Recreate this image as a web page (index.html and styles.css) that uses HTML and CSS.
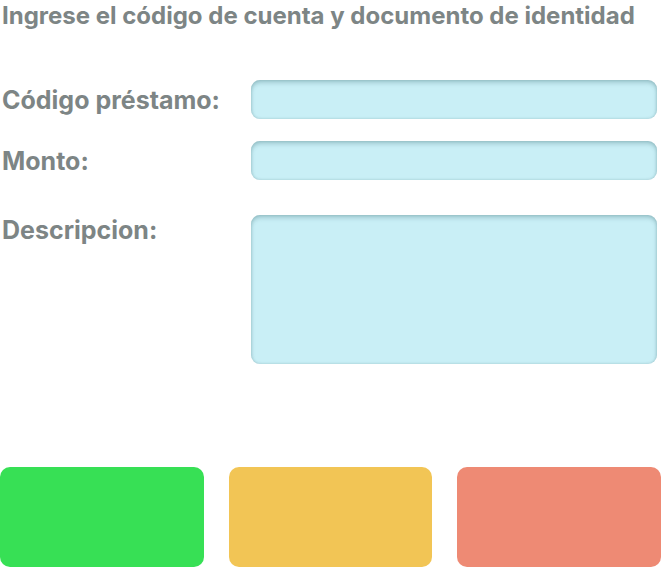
FILE: index.html
```html
<!DOCTYPE html>
<html lang="es">
<head>
<meta charset="utf-8">
<link rel="stylesheet" href="styles.css">
</head>
<body>
<div class="page">
  <h1 class="title">Ingrese el código de cuenta y documento de identidad</h1>
  <form class="form">
    <div class="row row-code">
      <label class="label">Código préstamo:</label>
      <div class="field field-short"></div>
    </div>
    <div class="row row-amount">
      <label class="label">Monto:</label>
      <div class="field field-short"></div>
    </div>
    <div class="row row-desc">
      <label class="label label-top">Descripcion:</label>
      <div class="field field-tall"></div>
    </div>
  </form>
  <div class="actions">
    <button class="btn btn-green" type="button"></button>
    <button class="btn btn-yellow" type="button"></button>
    <button class="btn btn-red" type="button"></button>
  </div>
</div>
</body>
</html>
```
FILE: styles.css
```css
html, body {
  margin: 0;
  padding: 0;
  background: #ffffff;
}
.page {
  width: 661px;
  height: 567px;
  display: flex;
  flex-direction: column;
  font-family: Inter, "Liberation Sans", sans-serif;
  color: #7d8585;
}
.title {
  margin: 0;
  padding: 1px 0 0 2px;
  height: 29px;
  font-size: 24px;
  line-height: 29px;
  font-weight: 700;
  white-space: nowrap;
}
.form {
  display: flex;
  flex-direction: column;
  margin-top: 50px;
}
.row {
  display: grid;
  grid-template-columns: 251px 406px;
  align-items: center;
}
.row-amount { margin-top: 22px; }
.row-desc { margin-top: 35px; align-items: start; }
.label {
  padding-left: 2px;
  font-size: 25px;
  font-weight: 700;
  line-height: 30px;
}
.label-top { padding-top: 0; }
.field {
  background: #c9eff6;
  border-radius: 9px;
  box-shadow: inset 0 3px 4px rgba(60, 110, 120, 0.28), inset 0 0 3px rgba(60, 110, 120, 0.28);
}
.field-short { height: 39px; }
.field-tall { height: 149px; }
.actions {
  display: flex;
  gap: 25px;
  margin-top: auto;
}
.btn {
  flex: 1;
  height: 100px;
  border: 0;
  border-radius: 10px;
  padding: 0;
}
.btn-green { background: #37e055; }
.btn-yellow { background: #f2c555; }
.btn-red { background: #ee8a74; }
```
